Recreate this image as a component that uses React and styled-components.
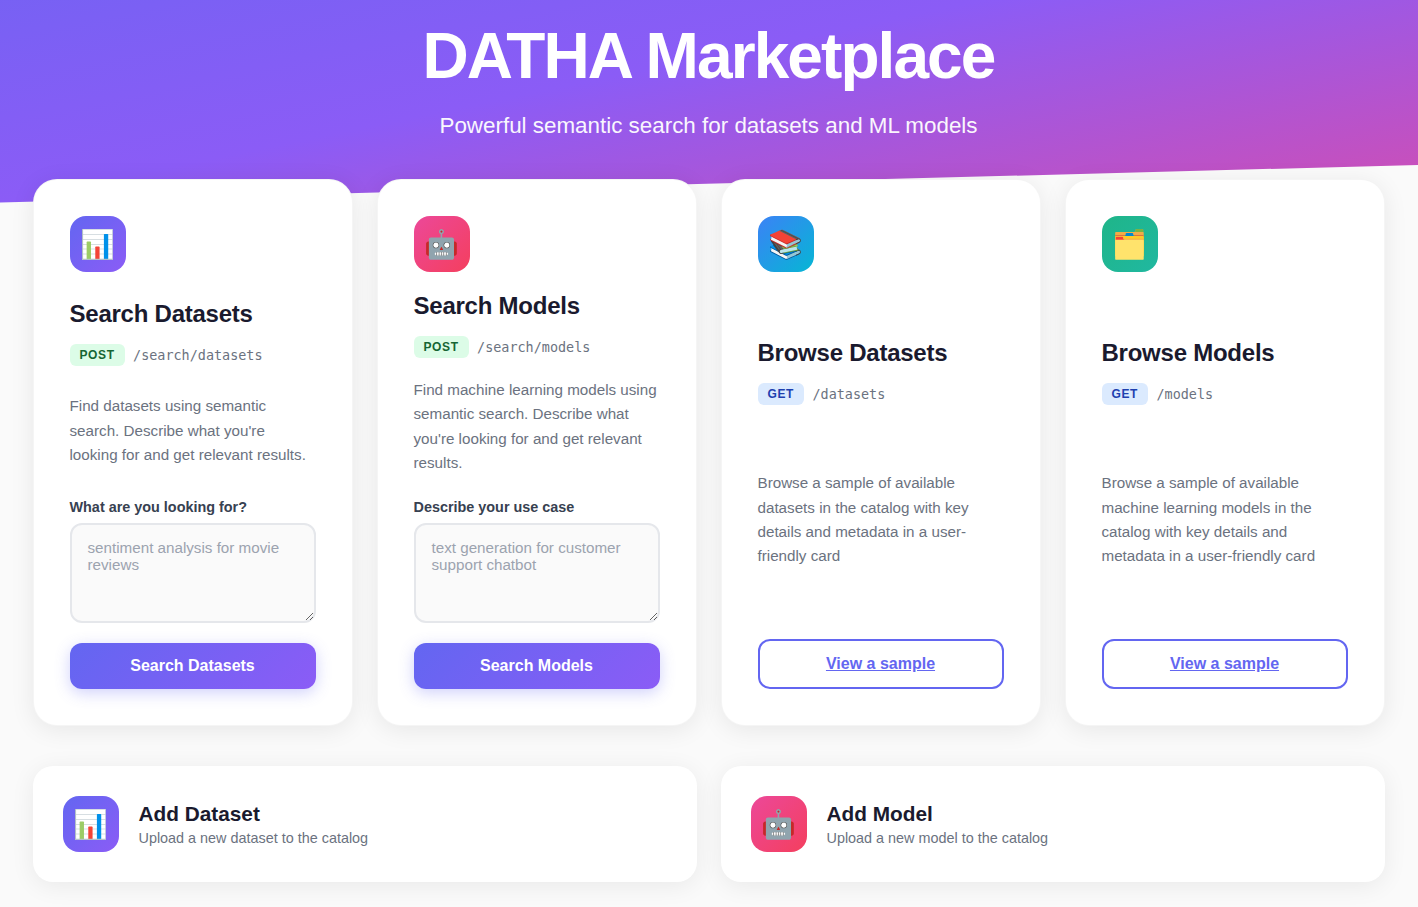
import React from "react";
import styled, { createGlobalStyle } from "styled-components";

const Global = createGlobalStyle`
  * { box-sizing: border-box; }
  html, body { margin: 0; padding: 0; }
  body {
    background: #fafafa;
    color: #1a1a2e;
    font-family: "Liberation Sans", Arial, sans-serif;
  }
`;

const Page = styled.div`
  min-height: 907px;
  overflow: hidden;
`;

const Hero = styled.header`
  height: 203px;
  padding: 18px 1px 0 0;
  text-align: center;
  color: #fff;
  background: linear-gradient(168.4deg, #6366f1 -209px, #8b5cf6 198px, #ec4899 605px);
  clip-path: polygon(0 0, 100% 0, 100% 165px, 0 202.5px);
`;

const Title = styled.h1`
  margin: 0 0 13px;
  font-size: 64px;
  line-height: 77px;
  font-weight: 700;
  letter-spacing: -0.03em;
`;

const Subtitle = styled.p`
  margin: 0;
  font-size: 22.4px;
  line-height: 36px;
  opacity: 0.95;
`;

const Main = styled.main`
  margin: -24px 33.5px 0 32.5px;
  position: relative;
`;

const CardGrid = styled.div`
  display: grid;
  grid-template-columns: repeat(4, 1fr);
  gap: 24px;
`;

const Card = styled.section`
  display: flex;
  flex-direction: column;
  justify-content: space-between;
  padding: 36px;
  background: #fff;
  border: 1px solid rgba(0, 0, 0, 0.04);
  border-radius: 24px;
  box-shadow: 0 4px 24px rgba(0, 0, 0, 0.08);
`;

const IconTile = styled.div`
  width: 56px;
  height: 56px;
  flex: none;
  display: flex;
  align-items: center;
  justify-content: center;
  border-radius: 16px;
  font-size: 28px;
  background: ${(p) => p.$bg};
`;

const CardIcon = styled(IconTile)`
  margin-bottom: 19px;
`;

const CardHead = styled.div`
  margin-bottom: 20px;
`;

const CardTitle = styled.h2`
  margin: 0 0 16px;
  font-size: 24px;
  line-height: 29px;
  font-weight: 700;
  letter-spacing: -0.01em;
  color: #1a1a2e;
`;

const EndpointRow = styled.div`
  display: flex;
  align-items: center;
  gap: 8.5px;
`;

const Method = styled.span`
  padding: 4px 10px;
  border-radius: 6px;
  font-size: 12px;
  line-height: 14px;
  font-weight: 700;
  letter-spacing: 0.05em;
  color: ${(p) => p.$color};
  background: ${(p) => p.$bg};
`;

const Path = styled.code`
  padding-top: 1px;
  font-family: "DejaVu Sans Mono", monospace;
  font-size: 13.44px;
  color: #6b7280;
`;

const Description = styled.p`
  margin: 0 0 24px;
  font-size: 15.2px;
  line-height: 24.32px;
  color: #6b7280;
`;

const Form = styled.form`
  display: flex;
  flex-direction: column;
`;

const Label = styled.label`
  margin-bottom: 8px;
  font-size: 14.4px;
  line-height: 16px;
  font-weight: 700;
  color: #374151;
`;

const TextArea = styled.textarea`
  display: block;
  width: 100%;
  height: 100px;
  padding: 14px 16px;
  margin-bottom: 20px;
  border: 2px solid #e5e7eb;
  border-radius: 12px;
  background: #fafafa;
  font-family: inherit;
  font-size: 15.2px;
  color: #374151;
  &::placeholder { color: #9ca3af; opacity: 1; }
`;

const Primary = styled.button`
  height: 46px;
  border: 0;
  border-radius: 12px;
  background: linear-gradient(135deg, #6366f1, #8b5cf6);
  box-shadow: 0 4px 15px rgba(99, 102, 241, 0.3);
  color: #fff;
  font-family: inherit;
  font-size: 16px;
  font-weight: 700;
`;

const Outline = styled.a`
  display: flex;
  align-items: center;
  justify-content: center;
  height: 50px;
  border: 2px solid #6366f1;
  border-radius: 12px;
  background: #fff;
  color: #6366f1;
  font-size: 16px;
  font-weight: 700;
  text-decoration: underline;
`;

const AddGrid = styled.div`
  display: grid;
  grid-template-columns: repeat(2, 1fr);
  gap: 24px;
  margin-top: 40px;
`;

const AddCard = styled.a`
  display: flex;
  align-items: center;
  gap: 20px;
  padding: 30px;
  background: #fff;
  border-radius: 20px;
  box-shadow: 0 4px 24px rgba(0, 0, 0, 0.07);
`;

const AddTitle = styled.h3`
  margin: 0 0 4px;
  font-size: 20.8px;
  line-height: 25px;
  font-weight: 700;
  color: #1a1a2e;
`;

const AddText = styled.p`
  margin: 0;
  font-size: 14.4px;
  line-height: 17px;
  color: #6b7280;
`;

const PURPLE = "linear-gradient(135deg, #6366f1, #8b5cf6)";
const PINK = "linear-gradient(135deg, #ec4899, #f43f5e)";
const BLUE = "linear-gradient(135deg, #3b82f6, #06b6d4)";
const GREEN = "linear-gradient(135deg, #1fb589, #20b8a0)";

const POST = { $color: "#166534", $bg: "#dcfce7" };
const GET = { $color: "#1e40af", $bg: "#dbeafe" };

export default function App() {
  return (
    <Page>
      <Global />
      <Hero>
        <Title>DATHA Marketplace</Title>
        <Subtitle>Powerful semantic search for datasets and ML models</Subtitle>
      </Hero>
      <Main>
        <CardGrid>
          <Card>
            <CardIcon $bg={PURPLE}>📊</CardIcon>
            <CardHead>
              <CardTitle>Search Datasets</CardTitle>
              <EndpointRow><Method {...POST}>POST</Method><Path>/search/datasets</Path></EndpointRow>
            </CardHead>
            <Description>Find datasets using semantic search. Describe what you're looking for and get relevant results.</Description>
            <Form>
              <Label>What are you looking for?</Label>
              <TextArea placeholder="sentiment analysis for movie reviews" />
              <Primary type="button">Search Datasets</Primary>
            </Form>
          </Card>
          <Card>
            <CardIcon $bg={PINK}>🤖</CardIcon>
            <CardHead>
              <CardTitle>Search Models</CardTitle>
              <EndpointRow><Method {...POST}>POST</Method><Path>/search/models</Path></EndpointRow>
            </CardHead>
            <Description>Find machine learning models using semantic search. Describe what you're looking for and get relevant results.</Description>
            <Form>
              <Label>Describe your use case</Label>
              <TextArea placeholder="text generation for customer support chatbot" />
              <Primary type="button">Search Models</Primary>
            </Form>
          </Card>
          <Card>
            <CardIcon $bg={BLUE}>📚</CardIcon>
            <CardHead>
              <CardTitle>Browse Datasets</CardTitle>
              <EndpointRow><Method {...GET}>GET</Method><Path>/datasets</Path></EndpointRow>
            </CardHead>
            <Description>Browse a sample of available datasets in the catalog with key details and metadata in a user-friendly card</Description>
            <Outline href="#">View a sample</Outline>
          </Card>
          <Card>
            <CardIcon $bg={GREEN}>🗂️</CardIcon>
            <CardHead>
              <CardTitle>Browse Models</CardTitle>
              <EndpointRow><Method {...GET}>GET</Method><Path>/models</Path></EndpointRow>
            </CardHead>
            <Description>Browse a sample of available machine learning models in the catalog with key details and metadata in a user-friendly card</Description>
            <Outline href="#">View a sample</Outline>
          </Card>
        </CardGrid>
        <AddGrid>
          <AddCard>
            <IconTile $bg={PURPLE}>📊</IconTile>
            <div><AddTitle>Add Dataset</AddTitle><AddText>Upload a new dataset to the catalog</AddText></div>
          </AddCard>
          <AddCard>
            <IconTile $bg={PINK}>🤖</IconTile>
            <div><AddTitle>Add Model</AddTitle><AddText>Upload a new model to the catalog</AddText></div>
          </AddCard>
        </AddGrid>
      </Main>
    </Page>
  );
}
